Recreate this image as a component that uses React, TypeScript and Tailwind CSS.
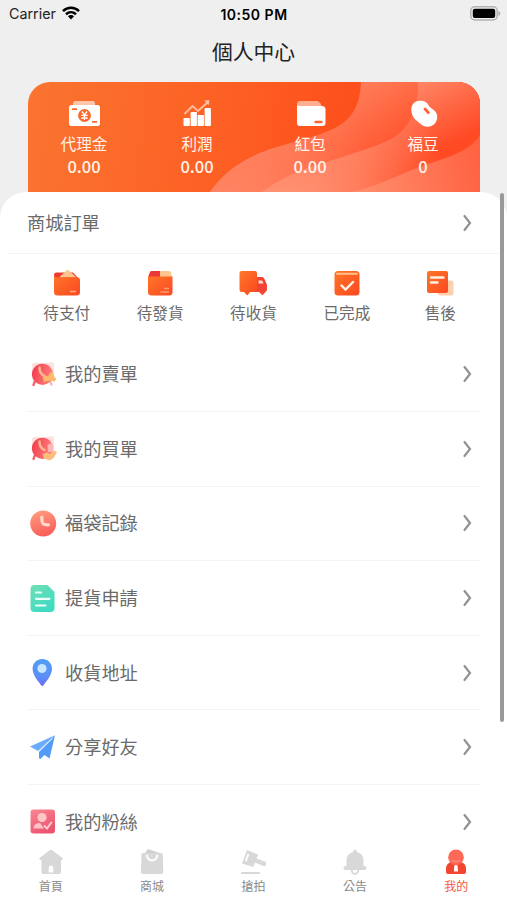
import type { ReactNode } from 'react';

interface Item { label: string; icon: ReactNode; value?: string; }

const StatusBar = () => (
  <div className="h-7 grid grid-cols-3 items-center pl-[9px] pr-[6px] text-black">
    <div className="flex items-center gap-[6px] text-[14.3px]">
      <span className="text-[#222]">Carrier</span>
      <svg className="-mt-[2px]" width="18" height="14" viewBox="0 0 18 14" fill="none" stroke="#000" strokeWidth="2.5">
        <path d="M1 5.1C5.5.7 12.5.7 17 5.1" />
        <path d="M4 8.3c2.9-2.6 7.1-2.6 10 0" />
        <path d="M5.9 10.2 9 13.4l3.1-3.2c-1.7-1.5-4.5-1.5-6.2 0Z" fill="#000" stroke="none" />
      </svg>
    </div>
    <div className="-ml-[2px] text-center text-[14px] font-semibold whitespace-nowrap tracking-[0.5px]">10:50 PM</div>
    <svg className="justify-self-end -mt-[2px]" width="31" height="15" viewBox="0 0 31 15">
      <rect x=".8" y=".8" width="26.4" height="13.2" rx="4" fill="#efefef" stroke="#b2b2b2" strokeWidth="1.5" />
      <rect x="2.8" y="2.8" width="22.4" height="9.2" rx="2" fill="#000" />
      <path d="M28.5 5v5c2.4-1 2.4-4 0-5Z" fill="#ababab" />
    </svg>
  </div>
);

const Waves = () => (
  <svg className="absolute inset-0" width="452" height="110" viewBox="0 0 452 110">
    <defs>
      <linearGradient id="base" gradientUnits="userSpaceOnUse" x1="0" y1="0" x2="320" y2="40">
        <stop offset="0" stopColor="#fa7430" />
        <stop offset=".55" stopColor="#fd6225" />
        <stop offset="1" stopColor="#fd501c" />
      </linearGradient>
      <linearGradient id="wave1" gradientUnits="userSpaceOnUse" x1="190" y1="90" x2="385" y2="50">
        <stop offset="0" stopColor="#ff8e6e" />
        <stop offset=".75" stopColor="#ff5a33" />
        <stop offset="1" stopColor="#ff5229" />
      </linearGradient>
      <linearGradient id="wave1top" gradientUnits="userSpaceOnUse" x1="340" y1="-5" x2="375" y2="60">
        <stop offset="0" stopColor="#ff7d5a" />
        <stop offset="1" stopColor="#ff7d5a" stopOpacity="0" />
      </linearGradient>
      <linearGradient id="wave2" gradientUnits="userSpaceOnUse" x1="240" y1="105" x2="410" y2="60">
        <stop offset="0" stopColor="#ffa485" />
        <stop offset=".5" stopColor="#ff7c5a" />
        <stop offset="1" stopColor="#ff4a24" />
      </linearGradient>
      <linearGradient id="wave2top" gradientUnits="userSpaceOnUse" x1="392" y1="0" x2="425" y2="62">
        <stop offset="0" stopColor="#ff8566" />
        <stop offset="1" stopColor="#ff8566" stopOpacity="0" />
      </linearGradient>
      <linearGradient id="wave3" gradientUnits="userSpaceOnUse" x1="330" y1="110" x2="450" y2="80">
        <stop offset="0" stopColor="#ff8e6e" />
        <stop offset="1" stopColor="#ff6342" />
      </linearGradient>
    </defs>
    <path d="M0 0h452v110H0Z" fill="url(#base)" />
    <path d="M333 0C332 22 326 36 307 46C286 57 254 62 232 71C209 81 193 94 182 110H452V0Z" fill="url(#wave1)" />
    <path d="M333 0C332 22 326 36 307 46C286 57 254 62 232 71C209 81 193 94 182 110H452V0Z" fill="url(#wave1top)" />
    <path d="M390 0C390 27 382 49 359 59C337 69 306 77 280 86C262 92 247 101 234 110H452V0Z" fill="url(#wave2)" />
    <path d="M390 0C390 27 382 49 359 59C337 69 306 77 280 86C262 92 247 101 234 110H452V0Z" fill="url(#wave2top)" />
    <path d="M452 53C443 69 418 76 397 83C374 91 350 104 324 110H452Z" fill="url(#wave3)" />
  </svg>
);

const wallet: Item[] = [
  {
    label: '代理金', value: '0.00',
    icon: (
      <svg width="32" height="28" viewBox="0 0 32 28">
        <path d="M4 3q0-2 2-2h18q2 0 2 2v2H4Z" fill="#ffc4a9" />
        <rect x="0" y="5" width="31" height="21" rx="2.5" fill="#fff" />
        <circle cx="15.5" cy="15.5" r="6.4" fill="#fb6a2b" />
        <path d="m13 11.5 2.5 3.5 2.5-3.5M12.3 15.3h6.4M12.3 18h6.4M15.5 15v5" fill="none" stroke="#fff" strokeWidth="1.3" />
        <path d="M3 9.2h5M23 21.8h5" stroke="#fb6a2b" strokeWidth="1.7" />
      </svg>
    ),
  },
  {
    label: '利潤', value: '0.00',
    icon: (
      <svg width="32" height="28" viewBox="0 0 32 28">
        <path d="m2.5 14 8-8 5.5 5L26 2" fill="none" stroke="#ffbd9e" strokeWidth="1.8" />
        <path d="m22.5.5 5-.3-1 5Z" fill="#ffc7ae" />
        <g fill="#fff">
          <rect x="1.5" y="18" width="6.3" height="8" rx=".8" />
          <rect x="8.6" y="12" width="6.3" height="14" rx=".8" />
          <rect x="15.6" y="15" width="6.3" height="11" rx=".8" />
          <rect x="22.6" y="8" width="6.3" height="18" rx=".8" />
        </g>
      </svg>
    ),
  },
  {
    label: '紅包', value: '0.00',
    icon: (
      <svg width="32" height="28" viewBox="0 0 32 28">
        <path d="M2 8V4q0-3 3-3h17q2 0 3.5 2.5L27 7Z" fill="#ffae91" />
        <path d="M2 5q1 1 3 1h22q3.5 0 3.5 3.5V23q0 3-3 3H5q-3 0-3-3Z" fill="#fff" />
        <path d="M20.5 22h6" stroke="#ff6534" strokeWidth="2.4" strokeLinecap="round" />
      </svg>
    ),
  },
  {
    label: '福豆', value: '0',
    icon: (
      <svg width="32" height="28" viewBox="0 0 32 28">
        <path d="M12.500 .8C17 .8 19.500 3 20.800 5.800 22 9 29.200 9.500 29.200 16.800c0 6-4.200 9.900-9.400 9.900-4.800 0-7.300-2.700-10.800-5.700C5.500 18 3.300 14.500 3.300 10 3.300 4 7 .8 12.500.8Z" fill="#fff" />
        <path d="m17 9 3.300 3.600" stroke="#ff6037" strokeWidth="2.800" strokeLinecap="round" />
      </svg>
    ),
  },
];

const Orange = ({ id }: { id: string }) => (
  <defs>
    <linearGradient id={id} x1="0" y1="0" x2="1" y2="1">
      <stop offset="0" stopColor="#ff7628" />
      <stop offset="1" stopColor="#fa4822" />
    </linearGradient>
  </defs>
);

const orders: Item[] = [
  {
    label: '待支付',
    icon: (
      <svg width="28" height="28" viewBox="0 0 28 28">
        <Orange id="pay" />
        <path d="M1 10V6q0-2.5 2.5-2.5H20l6 6.5Z" fill="#ed3b32" />
        <path d="m6 8.5 7.700-7.200q1-.8 2 0l7.800 7.200Z" fill="#ffc58f" />
        <path d="M1 6q.5 2.300 3 2.300h19.500q3.500 0 3.500 3V23q0 3.500-3.500 3.500h-19Q1 26.500 1 23Z" fill="url(#pay)" />
        <path d="M17 22.500h6" stroke="#ffb080" strokeWidth="1.500" />
      </svg>
    ),
  },
  {
    label: '待發貨',
    icon: (
      <svg width="28" height="28" viewBox="0 0 28 28">
        <Orange id="box" />
        <path d="M2 8.500 4 3q.4-1 2-1h17q1.500 0 2 1.500l1 5Z" fill="#ffc58f" />
        <path d="M2 8.500 4 3q.4-1 2-1h8v6.500Z" fill="#ed3836" />
        <path d="M2 7.500h24.500V23q0 3.500-3.500 3.500H5.500Q2 26.500 2 23Z" fill="url(#box)" />
        <path d="M18 19.500h5M14.500 23h8.500" stroke="#ff9b70" strokeWidth="1.400" />
      </svg>
    ),
  },
  {
    label: '待收貨',
    icon: (
      <svg width="28" height="28" viewBox="0 0 28 28">
        <Orange id="truck" />
        <path d="M17 8h6q1.500 0 2.500 2l2.200 5q.3 1 .3 2v3q0 3-2 3.500l-2.500 2.700L20 23h-3Z" fill="#f34334" />
        <path d="M19.500 11.500h3.500l1.600 3h-5.100Z" fill="#ffe0cd" />
        <path d="M.5 4q0-2 2-2H16q2 0 2 2v19h-7l-2.800 3.500L5 23H3Q.5 23 .5 20.500Z" fill="url(#truck)" />
      </svg>
    ),
  },
  {
    label: '已完成',
    icon: (
      <svg width="28" height="28" viewBox="0 0 28 28">
        <Orange id="done" />
        <rect x="1.500" y="2" width="25" height="24.500" rx="3.500" fill="url(#done)" />
        <path d="M4 4.800h20" stroke="#ffc08b" strokeWidth="1.900" strokeLinecap="round" />
        <path d="m8.500 16.500 4 4 7.500-7.500" fill="none" stroke="#fff4e7" strokeWidth="2.400" strokeLinecap="round" />
      </svg>
    ),
  },
  {
    label: '售後',
    icon: (
      <svg width="28" height="28" viewBox="0 0 28 28">
        <Orange id="after" />
        <rect x="12" y="11.500" width="15.500" height="15" rx="2" fill="#ffcfaa" />
        <rect x="1" y="2" width="21" height="22" rx="2" fill="url(#after)" />
        <path d="M5 8.500h12.500M5 13.500h6.500" stroke="#fff0e4" strokeWidth="2.400" strokeLinecap="round" />
      </svg>
    ),
  },
];

const AlarmIcon = ({ id, buy }: { id: string; buy?: boolean }) => (
  <svg width="27" height="27" viewBox="0 0 27 27">
    <defs>
      <linearGradient id={id} x1="0" y1=".3" x2="1" y2=".6">
        <stop offset="0" stopColor="#f23c4e" />
        <stop offset="1" stopColor="#ff837f" />
      </linearGradient>
    </defs>
    <path d="M2 11V3q3.500-2.500 7-1h8q4-1.500 7 0v10Z" fill="#ffe0e0" />
    <path d="m5 20-1.500 4" stroke="#f6666d" strokeWidth="2.400" strokeLinecap="round" />
    {!buy && <path d="m20 20 1.500 3.500" stroke="#ffb0a8" strokeWidth="2.200" strokeLinecap="round" />}
    <circle cx="12.500" cy="13.300" r="10.600" fill={`url(#${id})`} />
    <path d="M9.500 6.500c0 4 1.500 7 5 8.500" fill="none" stroke="#ffb590" strokeWidth="2.500" strokeLinecap="round" />
    {buy ? (
      <>
        <path d="M17.500 10.500q2-3 5-1.500 2 3 .5 8h-5Z" fill="#ffb4b8" />
        <path d="m12.500 19 4.500-1.500 3 1.500 4-3.500 3 1.500-3 5.500-4 3-6-2Z" fill="#ffbd7b" />
      </>
    ) : (
      <path d="m12.500 15.500 5.500-.5 3-4 2.500 1 .8 4 2.200 2-2 2.500-5-1-5.500 1.500Z" fill="#ffb96c" />
    )}
  </svg>
);

const rows: Item[] = [
  { label: '我的賣單', icon: <AlarmIcon id="sell" /> },
  { label: '我的買單', icon: <AlarmIcon id="buy" buy /> },
  {
    label: '福袋記錄',
    icon: (
      <svg width="27" height="27" viewBox="0 0 27 27">
        <defs>
          <linearGradient id="clock" x1=".3" y1="0" x2=".6" y2="1">
            <stop offset="0" stopColor="#ff9b7d" />
            <stop offset="1" stopColor="#fa5b59" />
          </linearGradient>
        </defs>
        <circle cx="13.200" cy="13.500" r="13" fill="url(#clock)" />
        <path d="M11.800 7c0 3.800.3 6 1.500 7 1.200.9 3 .8 5.200.8" fill="none" stroke="#ffdacb" strokeWidth="3.200" strokeLinecap="round" />
      </svg>
    ),
  },
  {
    label: '提貨申請',
    icon: (
      <svg width="27" height="27" viewBox="0 0 27 27">
        <defs>
          <linearGradient id="doc" x1="0" y1="0" x2=".5" y2="1">
            <stop offset="0" stopColor="#70dfb3" />
            <stop offset="1" stopColor="#40dbc3" />
          </linearGradient>
        </defs>
        <path d="M4.500 0h13l7 7v16q0 4-4 4h-16Q.5 27 .5 23V4Q.5 0 4.500 0Z" fill="url(#doc)" />
        <path d="M6 7.500h5M6 13.800h13.500M6 20.500h9.500" stroke="#e9fff8" strokeWidth="2.200" strokeLinecap="round" />
      </svg>
    ),
  },
  {
    label: '收貨地址',
    icon: (
      <svg width="27" height="27" viewBox="0 0 27 27">
        <defs>
          <linearGradient id="pin" x1="0" y1="0" x2="0" y2="1">
            <stop offset="0" stopColor="#519df5" />
            <stop offset=".65" stopColor="#5b8ff8" />
            <stop offset="1" stopColor="#7168f3" />
          </linearGradient>
        </defs>
        <path d="M12.300 0C6.800 0 2.600 4.200 2.600 9.700c0 6.300 5.300 12 8.300 16.300q1.400 1.800 2.800 0c3-4.300 8.300-10 8.300-16.300C22 4.200 17.800 0 12.300 0Z" fill="url(#pin)" />
        <circle cx="12" cy="9.500" r="4.600" fill="#c8e6ff" />
      </svg>
    ),
  },
  {
    label: '分享好友',
    icon: (
      <svg width="27" height="27" viewBox="0 0 27 27">
        <path d="M25 1.200 0 12.500l8 4.500Z" fill="#69abfc" />
        <path d="m25 1.200-5.500 23.300-5-3.500-4.500 4.300-1-1.300V18Z" fill="#539bf9" />
        <path d="M8.600 17.600 22.500 4.500" stroke="#cfe5ff" strokeWidth="1" />
      </svg>
    ),
  },
  {
    label: '我的粉絲',
    icon: (
      <svg width="27" height="27" viewBox="0 0 27 27">
        <defs>
          <linearGradient id="fans" x1="0" y1="0" x2=".5" y2="1">
            <stop offset="0" stopColor="#fa8793" />
            <stop offset="1" stopColor="#ed5470" />
          </linearGradient>
        </defs>
        <rect x=".5" y="1.500" width="24.500" height="24" rx="3" fill="url(#fans)" />
        <circle cx="12" cy="9.500" r="4.600" fill="#ffc6c6" />
        <path d="M3.500 20.500c0-4 3-5.500 6.500-5.500l4 5.500Z" fill="#ffc1c5" />
        <path d="m14.500 18 2.500 2.500 4.300-6" fill="none" stroke="#ffd0d2" strokeWidth="2" strokeLinecap="round" />
      </svg>
    ),
  },
];

const tabs: Item[] = [
  {
    label: '首頁',
    icon: (
      <svg width="26" height="26" viewBox="0 0 26 26" fill="#d8d8d8">
        <path d="M11.700 1.200q1.300-1 2.600 0L24.500 9q1 1.700-.8 2H23v12q0 2-2 2H5.500q-2 0-2-2V11h-1q-1.800-.3-1-2Z" />
        <path d="M10.700 23.500V19q0-2.500 2.300-2.500t2.300 2.500v4.500Z" fill="#fff" />
      </svg>
    ),
  },
  {
    label: '商城',
    icon: (
      <svg width="26" height="26" viewBox="0 0 26 26" fill="#d8d8d8">
        <path d="m6 4 3-4 13 4.500-1 4H5Z" fill="#d0d0d0" />
        <path d="M4 4h18q1.500 0 1.700 1.500L24.300 23q0 2-2 2H4q-2 0-2-2L2.500 5.500Q2.600 4 4 4Z" />
        <path d="M8 6.500c.7 6.500 9.500 6.500 10.200 0" fill="none" stroke="#fff" strokeWidth="2" strokeLinecap="round" />
      </svg>
    ),
  },
  {
    label: '搶拍',
    icon: (
      <svg width="26" height="26" viewBox="0 0 26 26" fill="#d8d8d8">
        <path d="m7 1 11 4.500-1.300 4L26 13q1 3-1.500 4.500l-9.500-4-1.500 4.500L2 14.500Z" />
        <path d="M8 6 6 11.500" stroke="#fff" strokeWidth="2" strokeLinecap="round" />
        <path d="M2 24h17" stroke="#d8d8d8" strokeWidth="2.200" strokeLinecap="round" />
      </svg>
    ),
  },
  {
    label: '公告',
    icon: (
      <svg width="26" height="26" viewBox="0 0 26 26" fill="#d8d8d8">
        <circle cx="13" cy="21.500" r="3.300" fill="#fff" stroke="#d8d8d8" strokeWidth="1.800" />
        <path d="M13 .5q1.500 0 2 2.500 6.500 1.500 6.500 9V17h1q2 0 2 2t-2 2H3.500q-2 0-2-2t2-2h1v-5q0-7.500 6.500-9 .5-2.500 2-2.500Z" />
      </svg>
    ),
  },
  {
    label: '我的',
    icon: (
      <svg width="26" height="26" viewBox="0 0 26 26">
        <path d="M3 23v-3c0-4 2-6.500 6-7h8c4 .5 6 3 6 7v3q0 2-2 2H5q-2 0-2-2Z" fill="#f24631" />
        <circle cx="13" cy="8.200" r="7.800" fill="#fd6957" />
        <path d="M9 11.500q4 2.500 8 0" fill="none" stroke="#ff9482" strokeWidth="1" />
        <path d="M11.300 16.200h3.200l.6 6.300h-4.200Z" fill="#fff" />
      </svg>
    ),
  },
];

const Chevron = () => (
  <svg width="12" height="18" viewBox="0 0 12 18" fill="none" stroke="#929292" strokeWidth="2.200" strokeLinecap="round">
    <path d="M3.500 2 9 9l-5.500 7" />
  </svg>
);

export default function App() {
  return (
    <div className="relative w-[507px] h-[900px] overflow-hidden flex flex-col bg-[#efefef] text-[#6a6a6a] font-['Inter','Noto_Sans_CJK_TC',sans-serif]">
      <StatusBar />
      <h1 className="h-[54px] pt-[8px] text-center text-[20.800px] leading-[30px] text-[#222] font-['Noto_Sans_CJK_TC',sans-serif]">個人中心</h1>

      <section className="relative h-[110px] shrink-0 mx-[28px] mr-[27px] rounded-t-[22px] overflow-hidden">
        <Waves />
        <div className="relative grid grid-cols-4 pt-[18px] text-[#fff4ec]">
          {wallet.map((w) => (
            <div key={w.label} className="flex flex-col items-center">
              {w.icon}
              <span className="mt-[3px] -ml-px text-[15.600px] leading-6 font-['Noto_Sans_CJK_TC',sans-serif]">{w.label}</span>
              <span className="-ml-px text-[16.500px] leading-[23px] font-medium font-['Noto_Sans_CJK_TC',sans-serif]">{w.value}</span>
            </div>
          ))}
        </div>
      </section>

      <main className="flex-1 min-h-0 overflow-hidden bg-white rounded-t-[26px] font-['Noto_Sans_CJK_TC',sans-serif]">
        <div className="h-[62px] mx-2 pl-[19px] pr-[26px] flex items-center justify-between border-b border-[#f4f4f4]">
          <span className="text-[18.200px]">商城訂單</span>
          <Chevron />
        </div>
        <div className="h-[83.500px] grid grid-cols-5 mx-5 pt-[15px]">
          {orders.map((o) => (
            <div key={o.label} className="flex flex-col items-center">
              {o.icon}
              <span className="mt-[4px] text-[15.600px] leading-[23px]">{o.label}</span>
            </div>
          ))}
        </div>
        {rows.map((r) => (
          <div key={r.label} className="h-[74.600px] mx-[28px] pl-[2px] pr-[6px] flex items-center border-b border-[#f3f3f3]">
            {r.icon}
            <span className="ml-[8px] mb-[1px] flex-1 text-[18.200px]">{r.label}</span>
            <Chevron />
          </div>
        ))}
      </main>

      <nav className="h-[57px] shrink-0 grid grid-cols-5 pt-[6px] bg-white font-['Noto_Sans_CJK_TC',sans-serif]">
        {tabs.map((t) => (
          <div key={t.label} className={`flex flex-col items-center text-[12px] leading-[18px] ${t.label === '我的' ? 'text-[#f45742]' : 'text-[#8a8a8a]'}`}>
            {t.icon}
            <span className="mt-[2px]">{t.label}</span>
          </div>
        ))}
      </nav>

      {/* scroll indicator */}
      <div className="absolute right-[3px] top-[193px] w-1 h-[529px] rounded-full bg-[#999]" />
    </div>
  );
}
